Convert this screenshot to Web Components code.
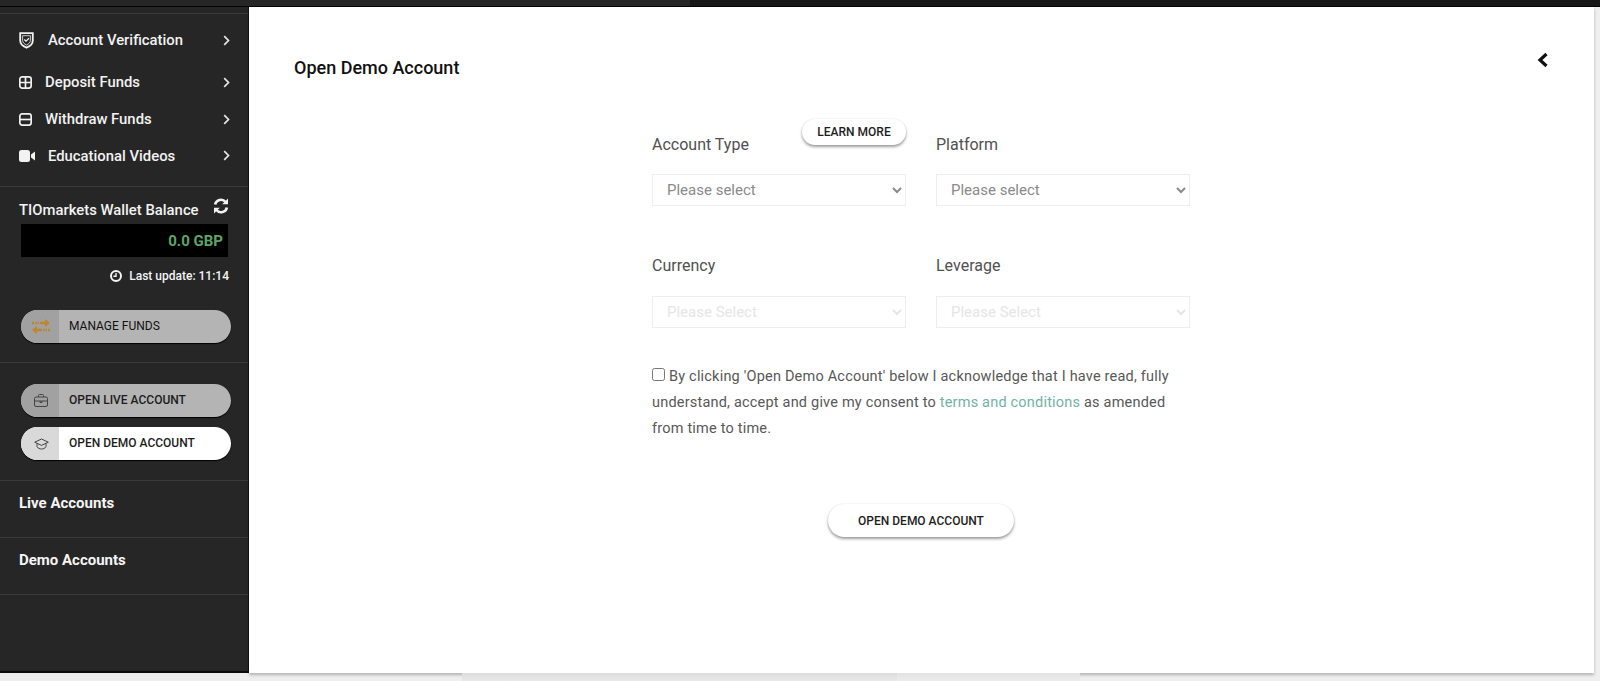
<!DOCTYPE html>
<html lang="en">
<head>
<meta charset="utf-8">
<title>Open Demo Account</title>
<style>
    html, body { margin: 0; height: 681px; overflow: hidden; background: #efefef; font-family: Roboto, "Liberation Sans", sans-serif; }
</style>
</head>
<body>
<app-shell>
    <side-bar slot="side"></side-bar>
    <demo-form slot="main"></demo-form>
</app-shell>

<script>
// Inline icons, shared by the elements below.
const ICONS = {
    shield: '<svg width="15" height="17" viewBox="0 0 15 17" fill="none" stroke="currentColor"><path d="M1.2 1.2h12.6v7.3c0 3.4-2.8 5.8-6.3 7.2C4 14.3 1.2 11.900 1.2 8.500z" stroke-width="1.800"/><path d="M3.600 3.700h7.800v4.600c0 2.200-1.800 3.800-3.900 4.700-2.100-.9-3.900-2.500-3.900-4.700z" stroke-width=".8"/><path d="M5.300 7.500l1.700 1.700 3-3" stroke-width="1.300"/></svg>',
    plus: '<svg width="13" height="13" viewBox="0 0 14 14" fill="none" stroke="currentColor" stroke-width="1.800"><rect x=".9" y=".9" width="12.200" height="12.200" rx="2.500"/><path d="M7 1v12M1 7h12"/></svg>',
    minus: '<svg width="13" height="13" viewBox="0 0 14 14" fill="none" stroke="currentColor" stroke-width="1.800"><rect x=".9" y=".9" width="12.200" height="12.200" rx="2.500"/><path d="M1 7h12"/></svg>',
    video: '<svg width="16" height="12" viewBox="0 0 16 12" fill="currentColor"><rect width="11" height="12" rx="2.500"/><path d="M12 4.500L16 1.500v9L12 7.500z"/></svg>',
    chevron: '<svg width="7" height="11" viewBox="0 0 7 11" fill="none" stroke="currentColor" stroke-width="1.700"><path d="M1.200 1.200l4.300 4.300-4.300 4.300"/></svg>',
    refresh: '<svg width="16" height="16" viewBox="0 0 16 16" fill="none" stroke="currentColor" stroke-width="2.600"><path d="M2.100 6.600A6 6 0 0 1 12.600 4"/><path d="M13.900 9.400A6 6 0 0 1 3.400 12"/><path d="M15 .5v5.800H9.200z" fill="currentColor" stroke="none"/><path d="M1 15.500V9.700h5.800z" fill="currentColor" stroke="none"/></svg>',
    clock: '<svg width="12" height="12" viewBox="0 0 12 12" fill="none" stroke="currentColor"><circle cx="6" cy="6" r="5" stroke-width="2"/><path d="M6 3v3.200H3.400" stroke-width="1.400"/></svg>',
    arrows: '<svg width="18" height="15" viewBox="0 0 18 15" fill="#bd862f"><path d="M8 2.700h5V0l5 4-5 4V5.300H8z"/><path d="M0 2.700h2v2.600H0zM3 2.700h1.500v2.600H3zM5.500 2.700H7v2.600H5.500z"/><path d="M10 9.700H5V7l-5 4 5 4v-2.700h5z"/><path d="M11 9.700h1.500v2.600H11zM13.500 9.700H15v2.600h-1.500zM16 9.700h2v2.600h-2z"/></svg>',
    briefcase: '<svg width="14" height="13" viewBox="0 0 14 13" fill="none" stroke="currentColor" stroke-width="1"><rect x=".5" y="3" width="13" height="9.500" rx="1.500"/><path d="M4.500 3V1.500a1 1 0 0 1 1-1h3a1 1 0 0 1 1 1V3M.5 7h13M6 7v1.500h2V7"/></svg>',
    cap: '<svg width="15" height="12" viewBox="0 0 15 12" fill="none" stroke="currentColor" stroke-width="1"><path d="M7.500 1L14.300 4.200 7.500 7.400.7 4.200z"/><path d="M3 5.500v3.300C4.200 10.400 5.800 11 7.500 11s3.300-.6 4.500-2.200V5.500"/></svg>'
};

class AppShell extends HTMLElement {
    constructor() {
        super();

        this.attachShadow({ mode: 'open' }).innerHTML = `
            <style>
                :host { display: flex; flex-direction: column; height: 681px; }
                .top { flex: none; height: 7px; display: flex; box-sizing: border-box; border-bottom: 1px solid #050505; }
                .top i { display: block; }
                .top i:first-child { width: 690px; background: #262626; }
                .top i:last-child { flex: 1; background: #171717; }
                .row { display: flex; height: 666px; flex: none; }
                .side { flex: none; width: 249px; background: #262626; border-bottom: 2px solid #0c0c0c; box-sizing: border-box; border-right: 1px solid #111; }
                .main { flex: none; width: 1345px; background: #fff; box-shadow: 0 2px 3px rgba(0, 0, 0, .25); }
                .bottom { flex: 1; display: flex; padding-left: 462px; }
                .bottom i { display: block; width: 435px; background: linear-gradient(#dcdcdc, #e9e9e9); }
                .bottom i + i { width: 183px; background: linear-gradient(#e2e2e2, #ececec); }
            </style>
            <div class="top"><i></i><i></i></div>
            <div class="row">
                <div class="side"><slot name="side"></slot></div>
                <div class="main"><slot name="main"></slot></div>
            </div>
            <div class="bottom"><i></i><i></i></div>
        `;
    }
}

class NavItem extends HTMLElement {
    connectedCallback() {
        const icon = this.getAttribute('icon');
        const gap = this.getAttribute('gap') || '18';

        this.attachShadow({ mode: 'open' }).innerHTML = `
            <style>
                :host { display: flex; align-items: center; height: 36.700px; padding: 0 19px 0 19px; color: #f2f2f2; font: 500 14.850px Roboto, sans-serif; }
                .icon { flex: none; display: flex; width: ${gap}px; margin-right: 8px; }
                .label { flex: 1; }
                .more { display: flex; margin-right: -1px; color: #e6e6e6; }
            </style>
            <span class="icon">${ICONS[icon]}</span>
            <span class="label"><slot></slot></span>
            <span class="more">${ICONS.chevron}</span>
        `;
    }
}

class PillLink extends HTMLElement {
    connectedCallback() {
        const icon = this.getAttribute('icon');
        const active = this.hasAttribute('active');
        const plain = this.hasAttribute('plain');

        this.attachShadow({ mode: 'open' }).innerHTML = `
            <style>
                :host { display: flex; height: 33px; width: 210px; margin-left: 21px; border-radius: 17px; overflow: hidden; background: ${active ? '#fff' : '#b4b4b4'}; color: ${plain ? '#111' : '#1c1c1c'}; font: ${plain ? '400 12px' : '500 12px'} Roboto, sans-serif; box-shadow: 0 1px 1px #000; }
                .icon { flex: none; width: 38px; display: flex; align-items: center; justify-content: center; padding-left: 2px; box-sizing: border-box; background: ${active ? '#d9d9d9' : '#a1a1a1'}; color: #444; }
                .label { align-self: center; margin-left: 10px; padding-bottom: 1px; }
            </style>
            <span class="icon">${ICONS[icon]}</span>
            <span class="label"><slot></slot></span>
        `;
    }
}

class WalletBalance extends HTMLElement {
    constructor() {
        super();

        this.attachShadow({ mode: 'open' }).innerHTML = `
            <style>
                :host { display: block; padding: 10px 20px 0 19px; color: #f2f2f2; font: 500 14.850px Roboto, sans-serif; }
                .head { display: flex; justify-content: space-between; height: 25px; padding-bottom: 2px; align-items: center; }
                .head span:last-child { display: flex; margin: -7px -1px 0 0; }
                .amount { height: 33px; margin: 0 0 0 2px; background: #000; color: #5da568; font-size: 15px; font-weight: 700; line-height: 35px; text-align: right; padding-right: 5px; }
                .update { display: flex; justify-content: flex-end; align-items: center; gap: 7px; height: 19px; margin: 9px -1px 0 0; font-size: 12px; color: #f4f4f4; }
                .update span { display: flex; }
            </style>
            <div class="head"><span>TIOmarkets Wallet Balance</span><span>${ICONS.refresh}</span></div>
            <div class="amount">0.0 GBP</div>
            <div class="update"><span>${ICONS.clock}</span>Last update: 11:14</div>
        `;
    }
}

class SideBar extends HTMLElement {
    constructor() {
        super();

        this.attachShadow({ mode: 'open' }).innerHTML = `
            <style>
                :host { display: block; padding-top: 6px; }
                section { border-bottom: 1px solid #3a3a3a; }
                .nav { padding: 7px 0 12px; }
                .nav nav-item:first-child { height: 38px; margin-bottom: 5px; }
                .wallet { height: 175px; }
                .wallet pill-link { margin-top: 25px; }
                .open { display: flex; flex-direction: column; gap: 10px; padding: 21px 0 20px; }
                .group { height: 57px; padding-left: 19px; color: #f5f5f5; font: 700 15px/44px Roboto, sans-serif; box-sizing: border-box; }
                .line { height: 0; border-bottom: 1px solid #3a3a3a; }
            </style>
            <div class="line"></div>
            <section class="nav">
                <nav-item icon="shield" gap="21">Account Verification</nav-item>
                <nav-item icon="plus">Deposit Funds</nav-item>
                <nav-item icon="minus">Withdraw Funds</nav-item>
                <nav-item icon="video" gap="21">Educational Videos</nav-item>
            </section>
            <section class="wallet">
                <wallet-balance></wallet-balance>
                <pill-link icon="arrows" plain>MANAGE FUNDS</pill-link>
            </section>
            <section class="open">
                <pill-link icon="briefcase">OPEN LIVE ACCOUNT</pill-link>
                <pill-link icon="cap" active>OPEN DEMO ACCOUNT</pill-link>
            </section>
            <section class="group">Live Accounts</section>
            <section class="group">Demo Accounts</section>
        `;
    }
}

class FormField extends HTMLElement {
    connectedCallback() {
        const disabled = this.hasAttribute('disabled');
        const text = this.getAttribute('placeholder');

        this.attachShadow({ mode: 'open' }).innerHTML = `
            <style>
                :host { display: block; position: relative; color: #505050; font: 400 16px Roboto, sans-serif; }
                label { display: block; height: 24px; line-height: 24px; margin-bottom: 17px; }
                :host([disabled]) label { margin: -1px 0 18px; }
                select { display: block; width: 100%; height: 32px; padding: 0 10px; border: 1px solid #eee; border-radius: 0; background: #fff; color: ${disabled ? '#e6e6e6' : '#8a8a8a'}; font: 400 15px Roboto, sans-serif; opacity: 1; }
            </style>
            <label><slot></slot></label>
            <select ${disabled ? 'disabled' : ''}><option>${text}</option></select>
        `;
    }
}

class RoundButton extends HTMLElement {
    constructor() {
        super();

        this.attachShadow({ mode: 'open' }).innerHTML = `
            <style>
                :host { display: inline-flex; align-items: center; justify-content: center; box-sizing: border-box; background: #fff; border-radius: 17px; color: #1d1d1d; font: 500 12px Roboto, sans-serif; box-shadow: 0 2px 3px rgba(0, 0, 0, .38), 0 0 2px rgba(0, 0, 0, .08); }
            </style>
            <slot></slot>
        `;
    }
}

class DemoForm extends HTMLElement {
    constructor() {
        super();

        this.attachShadow({ mode: 'open' }).innerHTML = `
            <style>
                :host { display: block; position: relative; height: 666px; font-family: Roboto, sans-serif; }
                h1 { margin: 0; padding: 50px 0 0 45px; height: 22px; color: #111; font-size: 18px; line-height: 22px; font-weight: 500; }
                .back { position: absolute; left: 1288px; top: 45px; display: flex; color: #111; }
                .form { width: 538px; margin: 0 0 0 403px; padding-top: 54px; position: relative; }
                .fields { display: grid; grid-template-columns: 254px 254px; gap: 49px 30px; }
                .learn { position: absolute; left: 150px; top: 40px; width: 104px; height: 26px; z-index: 1; }
                .terms { margin: 36px 0 0; width: 532px; color: #585858; font-size: 14.500px; line-height: 26px; letter-spacing: .2px; }
                .terms input { width: 13px; height: 13px; margin: 0 4px 0 0; vertical-align: 0; }
                .terms a { color: #6fb3a5; text-decoration: none; }
                .submit { width: 186px; height: 33px; margin: 62px 0 0 176px; display: flex; }
                .submit round-button { flex: 1; }
            </style>
            <h1>Open Demo Account</h1>
            <span class="back"><svg width="12" height="16" viewBox="0 0 12 16" fill="none" stroke="currentColor" stroke-width="3.200"><path d="M9.500 2L3 8l6.500 6"/></svg></span>
            <div class="form">
                <round-button class="learn">LEARN MORE</round-button>
                <div class="fields">
                    <form-field placeholder="Please select">Account Type</form-field>
                    <form-field placeholder="Please select">Platform</form-field>
                    <form-field placeholder="Please Select" disabled>Currency</form-field>
                    <form-field placeholder="Please Select" disabled>Leverage</form-field>
                </div>
                <p class="terms"><input type="checkbox">By clicking 'Open Demo Account' below I acknowledge that I have read, fully understand, accept and give my consent to <a href="#">terms and conditions</a> as amended from time to time.</p>
                <div class="submit"><round-button>OPEN DEMO ACCOUNT</round-button></div>
            </div>
        `;
    }
}

customElements.define('app-shell', AppShell);
customElements.define('nav-item', NavItem);
customElements.define('pill-link', PillLink);
customElements.define('wallet-balance', WalletBalance);
customElements.define('side-bar', SideBar);
customElements.define('form-field', FormField);
customElements.define('round-button', RoundButton);
customElements.define('demo-form', DemoForm);
</script>
</body>
</html>
